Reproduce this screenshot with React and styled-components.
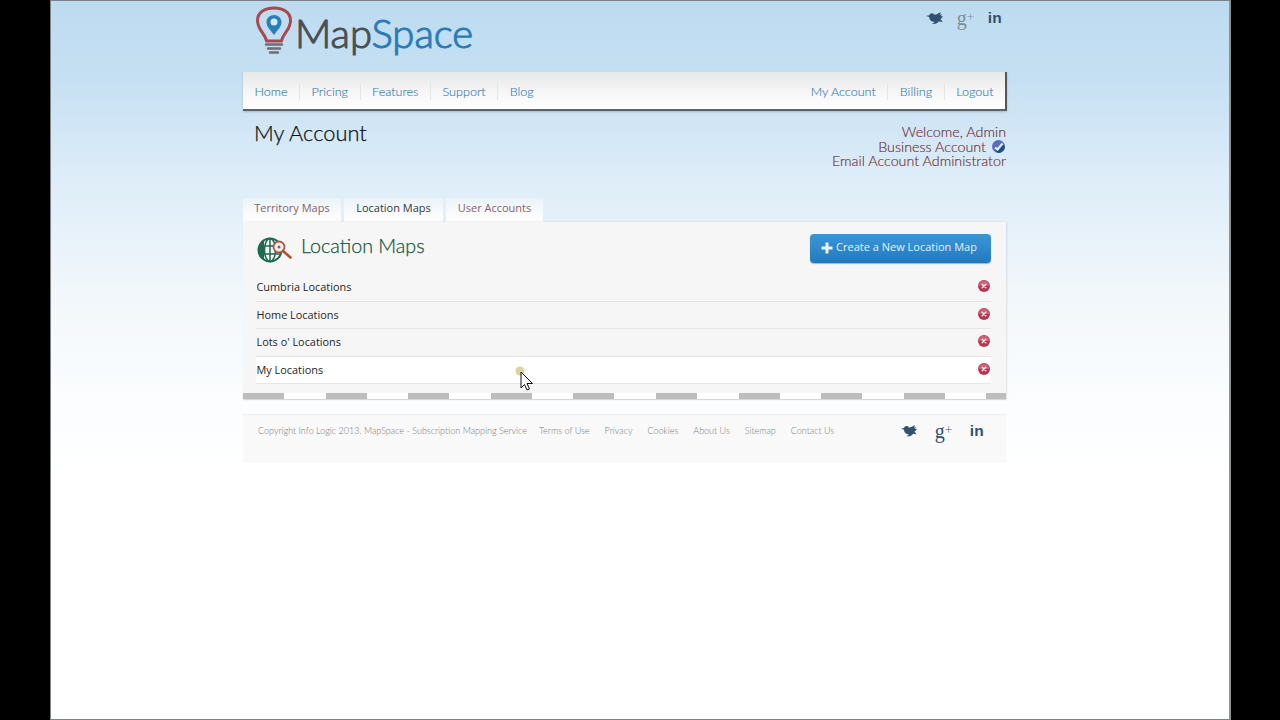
import React from 'react';
import styled, { createGlobalStyle } from 'styled-components';

const Global = createGlobalStyle`
  html, body { margin: 0; padding: 0; height: 100%; background: #000; }
  #root { height: 720px; overflow: hidden; }
  * { box-sizing: border-box; }
`;
const display = `"Lato", "Open Sans", sans-serif`;

const Stage = styled.div`
  width: 1280px; height: 720px; background: #000; padding: 0 49px 0 50px; display: flex;
`;
const Screen = styled.div`
  position: relative; flex: 1; padding-top: 1px; padding-left: 192px;
  border: 1px solid #7d8387; border-right: 2px solid #8e9294;
  background: linear-gradient(180deg, #bddbf0 0px, #c6e0f3 80px, #dcecf8 170px, #f1f7fb 290px, #fbfdfe 400px, #ffffff 480px);
`;
const Page = styled.div`
  width: 763px; display: flex; flex-direction: column;
`;
const Header = styled.header`
  height: 70px; display: flex; justify-content: space-between; align-items: flex-start;
`;
const Logo = styled.div`
  display: flex; align-items: flex-start; margin-left: 12px; padding-top: 4px;
`;
const LogoText = styled.div`
  font: 300 40px/52px ${display}; margin: 1px 0 0 2px; color: #4b4e53;
  -webkit-text-stroke: 1.1px currentColor;
  span { color: #2a7cb5; }
`;
const Social = styled.div`
  display: flex; align-items: center; gap: ${p => p.$gap}px; margin: ${p => p.$margin};
  color: #34506f;
`;
const Bird = styled.svg` display: block; width: ${p => p.$w}px; height: auto; fill: currentColor; `;
const Gplus = styled.span`
  font: 400 ${p => p.$size}px/1 "Liberation Serif", serif; color: ${p => p.$color}; width: ${p => p.$w}px; text-align: center;
  sup { font: 300 ${p => p.$size * .65}px/1 "Lato", sans-serif; vertical-align: ${p => p.$size * .2}px; line-height: 0; }
`;
const Linked = styled.span`
  font: 700 ${p => p.$size}px/1 "Liberation Sans", sans-serif; letter-spacing: .2px;
`;
const Nav = styled.nav`
  height: 39px; width: 764px; display: flex; justify-content: space-between; align-items: center; padding-top: 1px;
  background: linear-gradient(180deg, #e6e7e8 0%, #f4f4f4 45%, #ffffff 100%);
  border-right: 2px solid #55585a; border-bottom: 2px solid #5f6264;
  box-shadow: 0 1px 2px rgba(0,0,0,.2);
`;
const NavGroup = styled.div` display: flex; align-items: center; `;
const NavItem = styled.a`
  font: 300 12.6px/17px ${display}; color: #3a82bc; padding: 0 11.5px; height: 17px;
  -webkit-text-stroke: .15px currentColor;
  border-left: ${p => p.$first ? 'none' : '1px solid #e2e4e6'};
`;
const TitleRow = styled.div`
  height: 87px; display: flex; justify-content: space-between; padding: 8px 0 0 11px;
`;
const Title = styled.h1`
  margin: 0; font: 300 21.8px/28px ${display}; color: #0f1214; -webkit-text-stroke: .25px currentColor;
`;
const Welcome = styled.div`
  text-align: right; font: 300 14.3px/14.5px ${display}; color: #6f2a35; padding-top: 6px;
  -webkit-text-stroke: .15px currentColor;
`;
const WelcomeLine = styled.div`
  display: flex; justify-content: flex-end; align-items: center; gap: 6px;
`;
const Badge = styled.svg` width: 13px; height: 13px; display: block; margin-right: 1px; `;
const Tabs = styled.div` display: flex; gap: 3px; height: 24px; `;
const Tab = styled.a`
  font: 400 11px/20px "Open Sans", sans-serif; width: ${p => p.$w}px; text-align: center;
  background: linear-gradient(180deg, rgba(255,255,255,.25) 0%, #fcfcfc 75%);
  color: ${p => p.$active ? '#33383b' : '#87626a'};
`;
const Panel = styled.section`
  width: 763px; background: #f6f6f6; display: flex; flex-direction: column;
  box-shadow: 1px 0 2px rgba(0,0,0,.1);
`;
const PanelHead = styled.div`
  height: 52px; display: flex; align-items: flex-start; justify-content: space-between; padding: 11px 15px 0 14px;
`;
const PanelTitle = styled.div` display: flex; align-items: center; gap: 9px; `;
const PanelHeading = styled.h2` margin: 0; font: 300 19.7px/26px ${display}; color: #17583f; padding-bottom: 7px; -webkit-text-stroke: .25px currentColor; `;
const CreateButton = styled.button`
  width: 181px; height: 29px; margin-top: 1px; border: none; border-radius: 4px; padding: 0 3px 5px 0; display: flex; align-items: center; justify-content: center; gap: 3px;
  background: linear-gradient(180deg, #3b97d8 0%, #2279be 100%); color: #e4f1fa;
  font: 400 11px/1 "Open Sans", sans-serif; box-shadow: 0 1px 1px rgba(30,80,120,.4);
`;
const PlusIcon = styled.svg` width: 12px; height: 12px; display: block; margin: 4px 0 0 0; `;
const Rows = styled.div` padding: 0 15px 0 13px; `;
const Row = styled.div`
  height: 27.5px; display: flex; justify-content: space-between; align-items: center; padding: 1px 1px 0 .5px;
  border-bottom: 1px solid #e6e6e6; background: ${p => p.$hover ? '#fff' : 'transparent'};
  font: 400 10.9px/1 "Open Sans", sans-serif; color: #24272a;
`;
const Remove = styled.svg` width: 12px; height: 12px; display: block; margin-top: -3px; `;
const Strip = styled.div`
  height: 6px; margin-top: 9px; width: 763px;
  background: repeating-linear-gradient(90deg, #bdbdbd 0, #bdbdbd 41px, #ffffff 41px, #ffffff 82.6px);
  box-shadow: 0 1px 1px rgba(0,0,0,.12);
`;
const Footer = styled.footer`
  margin-top: 15px; height: 49px; width: 763px; background: #f9f9f9; border-top: 1px solid #eff0f1;
  display: flex; align-items: flex-start; padding: 9px 0 0 15px; justify-content: space-between;
`;
const FootLinks = styled.div`
  display: flex; gap: 15px; font: 300 9px/14px ${display}; color: #77797c; padding-top: 0;
`;
const Copyright = styled.span` margin-right: -3px; `;
const Cursor = styled.svg` position: absolute; left: 464px; top: 363px; width: 18px; height: 26px; overflow: visible; `;

const BirdIcon = ({ w }) => (
  <Bird $w={w} viewBox="0 0 24 17">
    <path d="M0 5.500 L4.500 4.500 C5.500 2 8 1 10 2 C11 2.500 11.600 3.200 12 4 C14.500 3.600 17.500 2.400 20.500 0 C20.600 1.600 20.200 3 19.400 4.200 C20.800 3.900 22 3.400 23 2.900 C22.400 4.200 21.500 5.300 20.400 6.100 C21.800 6.200 23 6 24 5.600 C22.800 8 21.500 9.200 20 10 C21.500 11 22.600 12.400 23.400 14.500 C21.400 13.500 19.800 13 18 13.400 C16 16 12.600 17.500 8 16.800 C10 16.200 11.400 15.200 12 14 C7.500 14 4.500 10.500 4.500 7 Z" />
  </Bird>
);
const RemoveIcon = () => (
  <Remove viewBox="0 0 12 12">
    <circle cx="6" cy="6" r="6" fill="#b5374f" />
    <path d="M0.500 6 A5.500 5.500 0 0 1 11.500 6 Z" fill="#cc6074" />
    <path d="M4.200 4.200 L7.800 7.800 M7.800 4.200 L4.200 7.800" stroke="#f6e6ea" strokeWidth="1.500" strokeLinecap="round" />
  </Remove>
);
const SocialSet = ({ gap, margin, bird, gsize, gw, lin, gcolor }) => (
  <Social $gap={gap} $margin={margin}>
    <BirdIcon w={bird} />
    <Gplus $size={gsize} $w={gw} $color={gcolor}>g<sup>+</sup></Gplus>
    <Linked $size={lin}>in</Linked>
  </Social>
);

const rows = ['Cumbria Locations', 'Home Locations', "Lots o' Locations", 'My Locations'];
const foot = ['Terms of Use', 'Privacy', 'Cookies', 'About Us', 'Sitemap', 'Contact Us'];

export default function App() {
  return (
    <Stage>
      <Global />
      <Screen>
        <Page>
          <Header>
            <Logo>
              <svg width="38" height="52" viewBox="0 0 38 52">
                <path d="M11.500 35 C10 27 2.500 24 2.500 14.500 C2.500 6.500 9.500 2 19 2 C28.500 2 35.500 6.500 35.500 14.500 C35.500 24 28 27 26.500 35 Z" fill="none" stroke="#a8484f" strokeWidth="3" strokeLinejoin="round" />
                <path d="M19 29 C15.500 24 11.500 21 11.500 16 C11.500 12 15 9 19 9 C23 9 26.500 12 26.500 16 C26.500 21 22.500 24 19 29 Z" fill="#2a7fb6" />
                <circle cx="19" cy="16" r="3.500" fill="#d6e8f5" />
                <path d="M11 38.500 H27 M13 42.500 H25 M15 46.500 H23" stroke="#6b6e72" strokeWidth="2.400" strokeLinecap="round" />
              </svg>
              <LogoText>Map<span>Space</span></LogoText>
            </Logo>
            <SocialSet gap={14} margin="6px 4px 0 0" bird={17} gsize={20} gw={17} lin={15.5} gcolor="#7f8d99" />
          </Header>
          <Nav>
            <NavGroup>
              {['Home', 'Pricing', 'Features', 'Support', 'Blog'].map((n, i) => <NavItem key={n} $first={i === 0}>{n}</NavItem>)}
            </NavGroup>
            <NavGroup>
              {['My Account', 'Billing', 'Logout'].map((n, i) => <NavItem key={n} $first={i === 0}>{n}</NavItem>)}
            </NavGroup>
          </Nav>
          <TitleRow>
            <Title>My Account</Title>
            <Welcome>
              <WelcomeLine>Welcome, Admin</WelcomeLine>
              <WelcomeLine>
                Business Account
                <Badge viewBox="0 0 13 13">
                  <circle cx="6.500" cy="6.500" r="6.500" fill="#5a6cc0" />
                  <path d="M6.500 13 A6.500 6.500 0 0 0 13 6.500 L9.500 3 L5 8.500 L3.500 11.500 Z" fill="#1f4f86" />
                  <path d="M3 7.500 L5.500 9.500 L10.500 3.500" stroke="#e8eef8" strokeWidth="2.200" fill="none" />
                </Badge>
              </WelcomeLine>
              <WelcomeLine>Email Account Administrator</WelcomeLine>
            </Welcome>
          </TitleRow>
          <Tabs>
            <Tab $w={98}>Territory Maps</Tab>
            <Tab $w={99} $active>Location Maps</Tab>
            <Tab $w={97}>User Accounts</Tab>
          </Tabs>
          <Panel>
            <PanelHead>
              <PanelTitle>
                <svg width="35" height="26" viewBox="0 0 35 26">
                  <circle cx="13" cy="13" r="11.500" fill="none" stroke="#1f6a50" strokeWidth="2" />
                  <ellipse cx="13" cy="13" rx="5.500" ry="11.500" fill="none" stroke="#1f6a50" strokeWidth="1.500" />
                  <path d="M2 9 H24 M2 17 H24 M13 1.500 V24.500" stroke="#1f6a50" strokeWidth="1.500" />
                  <path d="M1.500 13 A11.500 11.500 0 0 1 7 3.500 V22.500 A11.500 11.500 0 0 1 1.500 13 Z" fill="#1f6a50" />
                  <circle cx="22" cy="10" r="5.500" fill="#eef2ee" stroke="#a9574a" strokeWidth="1.800" />
                  <circle cx="22" cy="10" r="1.500" fill="#b5502f" />
                  <path d="M26 14 L33.500 20.500" stroke="#b5502f" strokeWidth="2.600" strokeLinecap="round" />
                </svg>
                <PanelHeading>Location Maps</PanelHeading>
              </PanelTitle>
              <CreateButton>
                <PlusIcon viewBox="0 0 12 12"><path d="M6 0.500 V11.500 M0.500 6 H11.500" stroke="#e8f2fa" strokeWidth="3" /></PlusIcon>
                Create a New Location Map
              </CreateButton>
            </PanelHead>
            <Rows>
              {rows.map((r, i) => (
                <Row key={r} $hover={i === 3}>{r}<RemoveIcon /></Row>
              ))}
            </Rows>
            <Strip />
          </Panel>
          <Footer>
            <FootLinks>
              <Copyright>Copyright Info Logic 2013. MapSpace - Subscription Mapping Service</Copyright>
              {foot.map(f => <span key={f}>{f}</span>)}
            </FootLinks>
            <SocialSet gap={18} margin="-3px 22px 0 0" bird={16} gsize={20} gw={17} lin={15.5} gcolor="#34506f" />
          </Footer>
        </Page>
        <Cursor viewBox="0 0 18 26">
          <circle cx="5" cy="7" r="4.500" fill="#cfc98a" opacity=".8" />
          <path d="M6 8 V24 L9.500 20.500 L12 26 L14.500 25 L12 19.500 L17.500 19.500 Z" fill="#fff" stroke="#111" strokeWidth="1" strokeLinejoin="round" />
        </Cursor>
      </Screen>
    </Stage>
  );
}
